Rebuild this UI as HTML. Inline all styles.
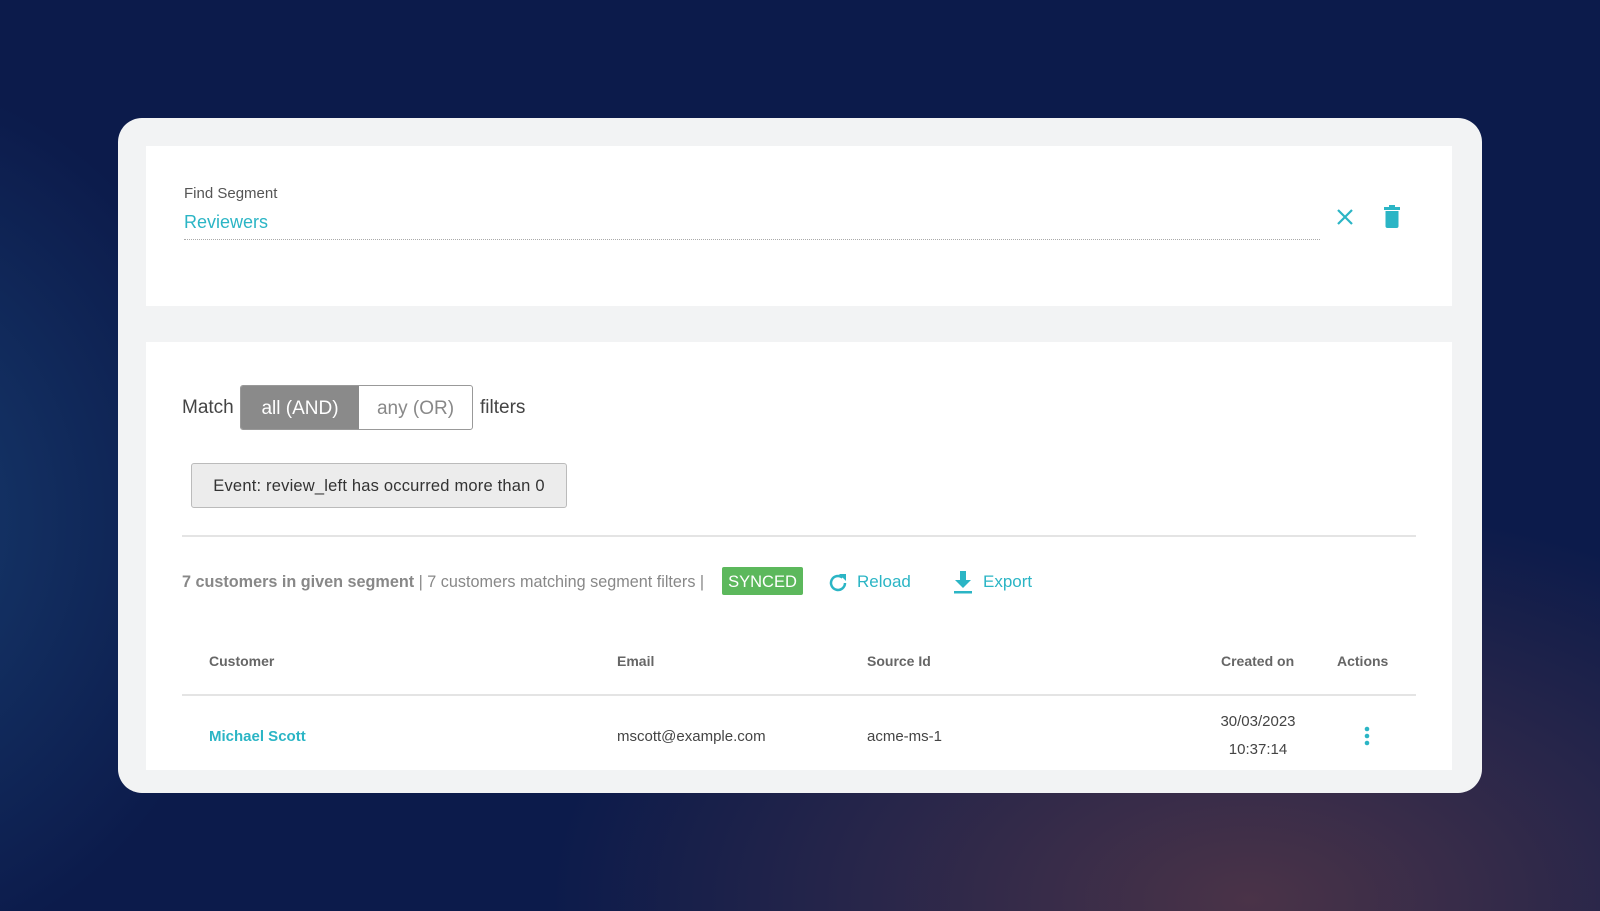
<!DOCTYPE html>
<html><head><style>
body{margin:0;width:1600px;height:911px;overflow:hidden;font-family:"Liberation Sans",sans-serif;
background:radial-gradient(ellipse 700px 400px at 1250px 900px,#4a3348 0%,rgba(74,51,72,0) 100%),radial-gradient(ellipse 400px 450px at -150px 520px,#173d70 0%,rgba(23,61,112,0) 100%),#0c1b4b;position:relative}
.a{position:absolute}
.card{left:118px;top:118px;width:1364px;height:675px;background:#f2f3f4;border-radius:24px}
.p{background:#fff;left:146px;width:1306px}
.t{color:#666;font-size:14px;font-weight:bold}
</style></head><body>
<div class="a card"></div>
<div class="a p" style="top:146px;height:160px"></div>
<div class="a p" style="top:342px;height:428px"></div>
<div class="a" style="left:184px;top:185px;font-size:15px;color:#555">Find Segment</div>
<div class="a" style="left:184px;top:212px;font-size:18px;color:#2bb5c5">Reviewers</div>
<div class="a" style="left:184px;top:239px;width:1136px;border-top:1px dotted #aaa"></div>
<svg class="a" style="left:1335px;top:207px" width="20" height="20" viewBox="0 0 20 20"><path d="M3 3L17 17M17 3L3 17" stroke="#2bb5c5" stroke-width="2.2"/></svg>
<svg class="a" style="left:1383px;top:205px" width="18" height="24" viewBox="0 0 18 24"><rect x="1" y="2" width="16" height="3" fill="#2bb5c5"/><rect x="6" y="0" width="6" height="3" fill="#2bb5c5"/><path d="M2.5 6H15.5V21Q15.5 23 13.5 23H4.5Q2.5 23 2.5 21Z" fill="#2bb5c5"/></svg>
<div class="a" style="left:182px;top:397px;font-size:19px;color:#444">Match</div>
<div class="a" style="left:240px;top:385px;width:231px;height:43px;border:1px solid #999;border-radius:3px;background:#fff;overflow:hidden">
<div class="a" style="left:0;top:0;width:118px;height:43px;background:#8a8a8a;color:#fff;font-size:19px;line-height:45px;text-align:center">all (AND)</div>
<div class="a" style="left:118px;top:0;width:113px;height:43px;color:#888;font-size:19px;line-height:45px;text-align:center">any (OR)</div></div>
<div class="a" style="left:480px;top:397px;font-size:19px;color:#444">filters</div>
<div class="a" style="left:191px;top:463px;width:374px;height:43px;background:#ececec;border:1px solid #bbb;border-radius:3px;font-size:16.5px;color:#333;line-height:45px;text-align:center;letter-spacing:0.2px">Event: review_left has occurred more than 0</div>
<div class="a" style="left:182px;top:535px;width:1234px;border-top:2px solid #e4e4e4"></div>
<div class="a" style="left:182px;top:573px;font-size:16.2px;color:#888;white-space:nowrap"><b style="color:#888">7 customers in given segment</b> | 7 customers matching segment filters |</div>
<div class="a" style="left:722px;top:567px;width:81px;height:28px;background:#5cb85c;border-radius:2px;color:#fff;font-size:16.5px;line-height:30px;text-align:center">SYNCED</div>
<svg class="a" style="left:827px;top:572px" width="22" height="22" viewBox="0 0 22 22"><path d="M18 11A7 7 0 1 1 15.5 5.6" fill="none" stroke="#2bb5c5" stroke-width="2.5"/><path d="M12 2H19V9Z" fill="#2bb5c5"/></svg>
<div class="a" style="left:857px;top:572px;font-size:17px;color:#2bb5c5">Reload</div>
<svg class="a" style="left:953px;top:571px" width="20" height="24" viewBox="0 0 20 24"><path d="M7 0H13V9H18L10 17L2 9H7Z" fill="#2bb5c5"/><rect x="1" y="20" width="18" height="2.5" fill="#2bb5c5"/></svg>
<div class="a" style="left:983px;top:572px;font-size:17px;color:#2bb5c5">Export</div>
<div class="a t" style="left:209px;top:653px">Customer</div>
<div class="a t" style="left:617px;top:653px">Email</div>
<div class="a t" style="left:867px;top:653px">Source Id</div>
<div class="a t" style="left:1221px;top:653px">Created on</div>
<div class="a t" style="left:1337px;top:653px">Actions</div>
<div class="a" style="left:182px;top:694px;width:1234px;border-top:2px solid #e4e4e4"></div>
<div class="a" style="left:209px;top:728px;font-size:15px;font-weight:bold;color:#2bb5c5">Michael Scott</div>
<div class="a" style="left:617px;top:728px;font-size:15px;color:#444">mscott@example.com</div>
<div class="a" style="left:867px;top:728px;font-size:15px;color:#444">acme-ms-1</div>
<div class="a" style="left:1200px;top:708px;width:116px;text-align:center;font-size:15px;color:#444;line-height:28px">30/03/2023<br>10:37:14</div>
<svg class="a" style="left:1363px;top:726px" width="8" height="22" viewBox="0 0 8 22"><circle cx="4" cy="3" r="2.3" fill="#2bb5c5"/><circle cx="4" cy="10" r="2.3" fill="#2bb5c5"/><circle cx="4" cy="17" r="2.3" fill="#2bb5c5"/></svg>
</body></html>
